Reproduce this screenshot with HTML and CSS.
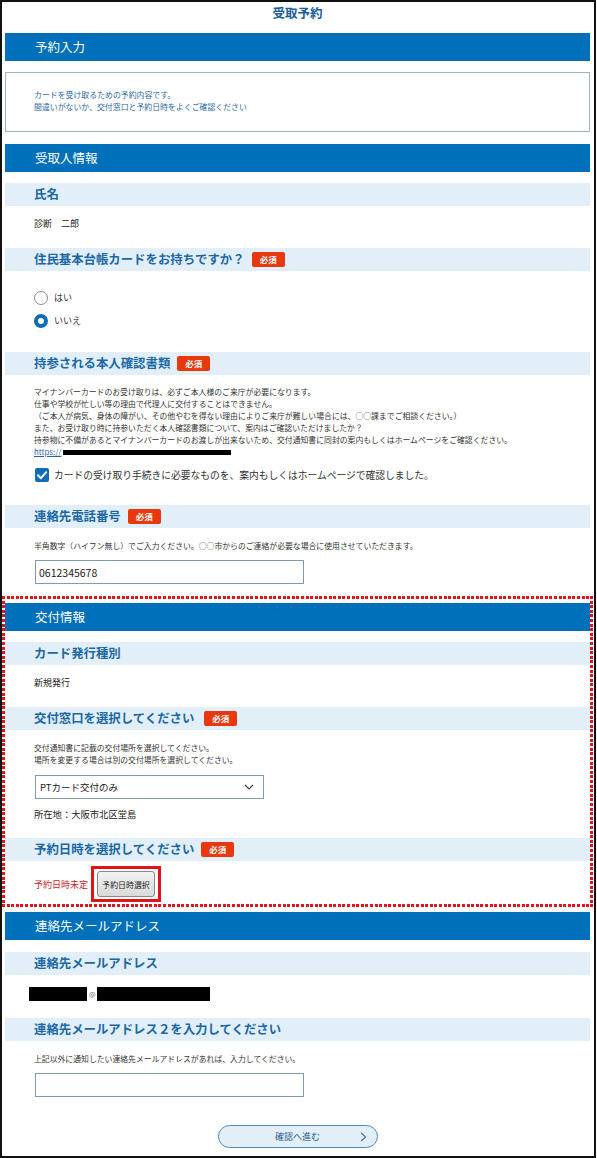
FILE: index.html
```html
<!DOCTYPE html>
<html lang="ja">
<head>
<meta charset="utf-8">
<title>受取予約</title>
<link rel="stylesheet" href="styles.css">
</head>
<body>
<div class="frame">
  <h1 class="page-title">受取予約</h1>

  <section class="block">
    <h2 class="bar">予約入力</h2>
    <div class="notice">
      <p>カードを受け取るための予約内容です。</p>
      <p>間違いがないか、交付窓口と予約日時をよくご確認ください</p>
    </div>
  </section>

  <section class="block block--recipient">
    <h2 class="bar">受取人情報</h2>

    <div class="field">
      <h3 class="band">氏名</h3>
      <div class="body body--value">
        <p class="value">診断　二郎</p>
      </div>
    </div>

    <div class="field">
      <h3 class="band">住民基本台帳カードをお持ちですか？<span class="badge">必須</span></h3>
      <div class="body body--radios">
        <div class="radio-row"><span class="radio"></span><span class="radio-label">はい</span></div>
        <div class="radio-row"><span class="radio radio--on"></span><span class="radio-label">いいえ</span></div>
      </div>
    </div>

    <div class="field">
      <h3 class="band">持参される本人確認書類<span class="badge">必須</span></h3>
      <div class="body body--docs">
        <div class="notes">
          <p>マイナンバーカードのお受け取りは、必ずご本人様のご来庁が必要になります。</p>
          <p>仕事や学校が忙しい等の理由で代理人に交付することはできません。</p>
          <p>（ご本人が病気、身体の障がい、その他やむを得ない理由によりご来庁が難しい場合には、○○課までご相談ください。）</p>
          <p>また、お受け取り時に持参いただく本人確認書類について、案内はご確認いただけましたか？</p>
          <p>持参物に不備があるとマイナンバーカードのお渡しが出来ないため、交付通知書に同封の案内もしくはホームページをご確認ください。</p>
          <p><a class="link" href="#">https://</a><span class="redact redact--link"></span></p>
        </div>
        <div class="check-row">
          <span class="checkbox">
            <svg width="14" height="14" viewBox="0 0 14 14"><path d="M3 7.3 L5.9 10.2 L11.2 4.2" fill="none" stroke="#fff" stroke-width="2" stroke-linecap="round" stroke-linejoin="round"/></svg>
          </span>
          <span class="check-label">カードの受け取り手続きに必要なものを、案内もしくはホームページで確認しました。</span>
        </div>
      </div>
    </div>

    <div class="field">
      <h3 class="band">連絡先電話番号<span class="badge">必須</span></h3>
      <div class="body body--input">
        <p class="note">半角数字（ハイフン無し）でご入力ください。○○市からのご連絡が必要な場合に使用させていただきます。</p>
        <input class="text-input" type="text" value="0612345678" readonly>
      </div>
    </div>
  </section>

  <section class="block block--issue">
    <h2 class="bar">交付情報</h2>

    <div class="field">
      <h3 class="band">カード発行種別</h3>
      <div class="body body--value">
        <p class="value">新規発行</p>
      </div>
    </div>

    <div class="field">
      <h3 class="band">交付窓口を選択してください<span class="badge badge--wide">必須</span></h3>
      <div class="body body--window">
        <p class="note">交付通知書に記載の交付場所を選択してください。</p>
        <p class="note">場所を変更する場合は別の交付場所を選択してください。</p>
        <div class="select">
          <span>PTカード交付のみ</span>
          <svg width="10" height="6" viewBox="0 0 10 6"><path d="M1 1 L5 5 L9 1" fill="none" stroke="#444" stroke-width="1.2"/></svg>
        </div>
        <p class="location">所在地：大阪市北区堂島</p>
      </div>
    </div>

    <div class="field">
      <h3 class="band">予約日時を選択してください<span class="badge">必須</span></h3>
      <div class="body body--date">
        <span class="pending">予約日時未定</span>
        <span class="focus-box"><button class="date-button" type="button">予約日時選択</button></span>
      </div>
    </div>
  </section>

  <section class="block block--mail">
    <h2 class="bar">連絡先メールアドレス</h2>

    <div class="field">
      <h3 class="band">連絡先メールアドレス</h3>
      <div class="body body--mail">
        <span class="redact redact--user"></span><span class="at">@</span><span class="redact redact--domain"></span>
      </div>
    </div>

    <div class="field">
      <h3 class="band">連絡先メールアドレス２を入力してください</h3>
      <div class="body body--input">
        <p class="note">上記以外に通知したい連絡先メールアドレスがあれば、入力してください。</p>
        <input class="text-input" type="text" value="" readonly>
      </div>
    </div>
  </section>

  <div class="actions">
    <button class="next-button" type="button">
      <span>確認へ進む</span>
      <svg class="next-arrow" width="7" height="10" viewBox="0 0 7 10"><path d="M1.2 1 L5.6 5 L1.2 9" fill="none" stroke="#3d6f9c" stroke-width="1.1"/></svg>
    </button>
  </div>
</div>
</body>
</html>
```

FILE: styles.css
```css
* {
  box-sizing: border-box;
}

html, body {
  margin: 0;
  padding: 0;
  background: #fff;
}

body {
  font-family: "Noto Sans CJK JP", "Noto Sans", sans-serif;
  color: #333;
}

p {
  margin: 0;
}

.frame {
  width: 596px;
  height: 1158px;
  border: 2px solid #111;
  padding: 0 4px 0 3px;
  overflow: hidden;
}

.page-title {
  margin: 0;
  height: 31px;
  line-height: 22px;
  text-align: center;
  font-size: 12.5px;
  font-weight: 700;
  color: #1a5c9c;
}

/* section header bars */
.bar {
  margin: 0;
  height: 28px;
  line-height: 28px;
  padding-left: 30px;
  background: #0070ba;
  color: #fff;
  font-size: 12.5px;
  font-weight: 400;
}

.notice {
  margin-top: 11px;
  height: 60px;
  border: 1px solid #9cb4c6;
  padding: 16px 0 0 28px;
  color: #2a6aa6;
  font-size: 7.9px;
  line-height: 12px;
}

.block--recipient {
  margin-top: 12px;
}

.block--issue {
  margin-top: 19px;
  position: relative;
}

/* dotted highlight frame around the issue section */
.block--issue::after {
  content: "";
  position: absolute;
  top: -7px;
  bottom: -5px;
  left: -3px;
  right: -3px;
  pointer-events: none;
  background:
    repeating-linear-gradient(90deg, #e5141b 0 3px, transparent 3px 4.6px) top left / 100% 3px no-repeat,
    repeating-linear-gradient(90deg, #e5141b 0 3px, transparent 3px 4.6px) bottom left / 100% 3px no-repeat,
    repeating-linear-gradient(180deg, #e5141b 0 3px, transparent 3px 4.6px) top left / 3px 100% no-repeat,
    repeating-linear-gradient(180deg, #e5141b 0 3px, transparent 3px 4.6px) top right / 3px 100% no-repeat;
}

.block--mail {
  margin-top: 10px;
}

.bar + .field {
  margin-top: 11px;
}

.block--mail .bar + .field {
  margin-top: 12px;
}

/* field header bands */
.band {
  margin: 0;
  height: 23px;
  padding-left: 29px;
  display: flex;
  align-items: center;
  background: #e2eff9;
  color: #1b68a6;
  font-size: 12.4px;
  font-weight: 700;
  line-height: 23px;
}

.badge {
  display: inline-block;
  margin-left: 7px;
  width: 33px;
  height: 15px;
  line-height: 15px;
  border-radius: 2px;
  background: #e8380d;
  color: #fff;
  font-size: 8.5px;
  font-weight: 700;
  text-align: center;
}

.badge--wide {
  margin-left: 10px;
}

.body {
  padding-left: 29px;
}

.body--value {
  padding-top: 12px;
  padding-bottom: 18px;
}

.value {
  font-size: 9px;
  line-height: 12px;
  color: #222;
}

.body--radios {
  padding-top: 15px;
  padding-bottom: 20px;
}

.radio-row {
  height: 23px;
  display: flex;
  align-items: center;
}

.radio {
  width: 14px;
  height: 14px;
  border-radius: 50%;
  border: 1px solid #8f8f8f;
  background: #fff;
}

.radio--on {
  border: 4px solid #0d6db6;
  background: #fff;
}

.radio-label {
  margin-left: 6px;
  font-size: 9px;
  color: #333;
}

.body--docs {
  padding-top: 11px;
  padding-bottom: 22px;
}

.notes {
  font-size: 7.85px;
  line-height: 12px;
  color: #333;
}

.link {
  color: #2a62b0;
  text-decoration: underline;
}

.redact {
  display: inline-block;
  background: #000;
}

.redact--link {
  width: 168px;
  height: 5px;
  margin-left: 2px;
  vertical-align: 0;
}

.check-row {
  margin-top: 9px;
  height: 16px;
  display: flex;
  align-items: center;
}

.checkbox {
  width: 14px;
  height: 14px;
  margin-left: 1px;
  border-radius: 2px;
  background: #0d6db6;
  display: flex;
}

.check-label {
  margin-left: 5px;
  font-size: 9.75px;
  color: #333;
}

.body--input {
  padding-top: 12px;
}

.note {
  font-size: 7.85px;
  line-height: 12px;
  color: #333;
}

.text-input {
  display: block;
  margin: 8px 0 0 1px;
  width: 269px;
  height: 24px;
  border: 1px solid #7e9db4;
  border-radius: 0;
  padding: 0 0 0 3px;
  font-family: inherit;
  font-size: 10.5px;
  color: #222;
  background: #fff;
  outline: none;
}

.body--window {
  padding-top: 12px;
  padding-bottom: 17px;
}

.select {
  margin: 9px 0 0 1px;
  width: 229px;
  height: 24px;
  border: 1px solid #7e9db4;
  padding: 0 9px 0 4px;
  display: flex;
  align-items: center;
  justify-content: space-between;
  font-size: 9.5px;
  color: #222;
}

.location {
  margin-top: 8px;
  font-size: 9.3px;
  line-height: 14px;
  color: #222;
}

.body--date {
  padding-top: 5px;
  display: flex;
  align-items: center;
}

.pending {
  font-size: 9px;
  color: #c5262c;
}

.focus-box {
  margin-left: 3px;
  border: 3px solid #e3121a;
  padding: 2px 3px;
  display: flex;
}

.date-button {
  width: 58px;
  height: 26px;
  border: 1px solid #888;
  border-radius: 3px;
  background: linear-gradient(#f2f2f2, #dadada);
  padding: 0;
  font-family: inherit;
  font-size: 7.9px;
  color: #222;
}

.body--mail {
  padding-top: 12px;
  padding-bottom: 17px;
  height: 43px;
  display: flex;
  align-items: flex-start;
}

.redact--user {
  margin-left: -5px;
  width: 58px;
  height: 14px;
}

.at {
  margin: 0 2px 0 2px;
  width: 6px;
  font-size: 7px;
  line-height: 14px;
  color: #666;
}

.redact--domain {
  width: 113px;
  height: 14px;
}

.actions {
  margin-top: 28px;
  display: flex;
  justify-content: center;
}

.next-button {
  position: relative;
  width: 160px;
  height: 23px;
  border: 1px solid #5688b4;
  border-radius: 12px;
  background: #e2eff9;
  padding: 0;
  font-family: inherit;
  font-size: 9px;
  color: #2c5e8f;
  display: flex;
  align-items: center;
  justify-content: center;
}

.next-arrow {
  position: absolute;
  right: 10px;
  top: 6px;
}
```
